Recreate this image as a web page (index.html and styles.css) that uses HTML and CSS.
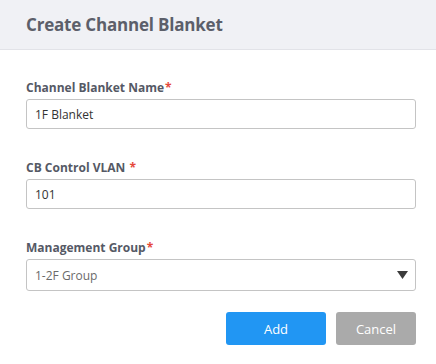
FILE: index.html
```html
<!DOCTYPE html>
<html>
<head>
<meta charset="utf-8">
<link rel="stylesheet" href="styles.css">
</head>
<body>
<div class="dialog">
  <div class="header"><h1 class="title">Create Channel Blanket</h1></div>
  <form class="form">
    <div class="field">
      <label class="label">Channel Blanket Name<span class="req">*</span></label>
      <input class="input" type="text" value="1F Blanket">
    </div>
    <div class="field">
      <label class="label">CB Control VLAN <span class="req">*</span></label>
      <input class="input" type="text" value="101">
    </div>
    <div class="field">
      <label class="label">Management Group<span class="req">*</span></label>
      <div class="select">
        <span class="select-text">1-2F Group</span>
        <svg class="caret" width="11" height="8" viewBox="0 0 11 8"><path d="M0 0H11L5.5 8Z" fill="#3c3c3c"/></svg>
      </div>
    </div>
    <div class="actions">
      <button type="button" class="btn btn-primary">Add</button>
      <button type="button" class="btn btn-cancel">Cancel</button>
    </div>
  </form>
</div>
</body>
</html>
```
FILE: styles.css
```css
* { box-sizing: border-box; }
html, body { margin: 0; padding: 0; background: #fff; }
body { font-family: "Open Sans", "Noto Sans", sans-serif; width: 436px; height: 364px; overflow: hidden; }
.dialog { width: 436px; }
.header {
  height: 50px;
  background: #f0f1f5;
  border-bottom: 1px solid #e2e3e8;
  display: flex;
  align-items: center;
  padding: 0 26px 1px;
}
.title { margin: 0; font-size: 17px; font-weight: 700; color: #5c5f6a; letter-spacing: -0.2px; }
.form { padding: 29px 20px 0 26px; display: flex; flex-direction: column; }
.field { display: flex; flex-direction: column; margin-bottom: 30px; }
.label { font-size: 12px; font-weight: 700; color: #555965; line-height: 18px; margin-bottom: 2px; }
.req { color: #e5483b; margin-left: 1px; }
.input {
  height: 30px;
  border: 1px solid #c4c4c4;
  border-radius: 3px;
  padding: 0 8px;
  font-family: inherit;
  font-size: 12px;
  color: #333;
  outline: none;
}
.select {
  height: 32px;
  border: 1px solid #c4c4c4;
  border-radius: 3px;
  padding: 0 7px 0 8px;
  display: flex;
  align-items: center;
  justify-content: space-between;
}
.select-text { font-size: 12px; color: #6a6a6a; }
.actions { display: flex; justify-content: flex-end; gap: 10px; margin-top: -9px; }
.btn {
  height: 33px;
  border: none;
  border-radius: 3px;
  font-family: inherit;
  font-size: 13px;
  color: #fff;
  cursor: pointer;
}
.btn-primary { width: 100px; background: #2196f3; }
.btn-cancel { width: 80px; background: #aaaaaa; }
```
